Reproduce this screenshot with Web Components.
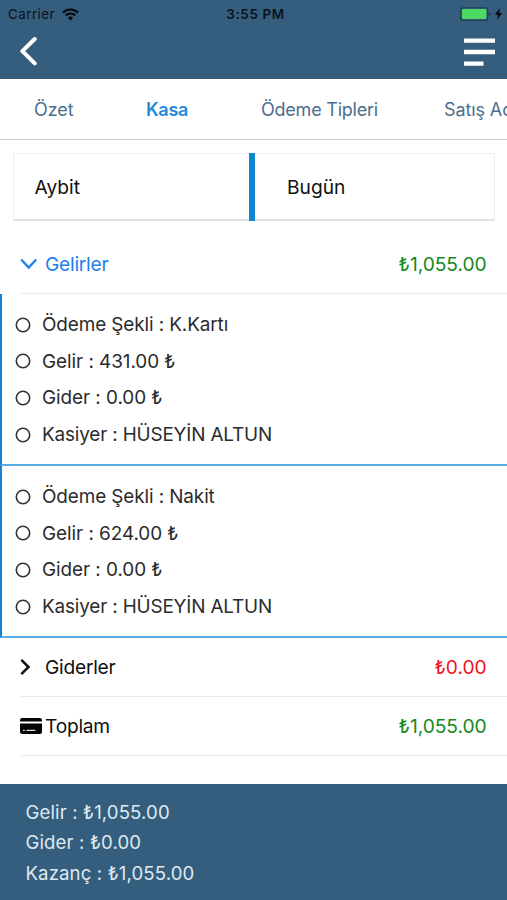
<!DOCTYPE html>
<html lang="tr">
<head>
<meta charset="utf-8">
<meta name="viewport" content="width=device-width">
<title>Kasa</title>
<style>
html,body{margin:0;height:100%;background:#fff;overflow:hidden}
</style>
</head>
<body>
<kasa-app></kasa-app>
<script>
const define = (name, html) => {
  const tpl = document.createElement('template');
  tpl.innerHTML = '<style>*{box-sizing:border-box}:host{box-sizing:border-box}</style>' + html;
  customElements.define(name, class extends HTMLElement {
    constructor() {
      super();
      this.attachShadow({mode: 'open'}).append(tpl.content.cloneNode(true));
    }
  });
};

define('status-bar', `
<style>
:host{display:grid;grid-template-columns:1fr auto 1fr;align-items:center;height:28px;padding:0 5px 0 8px;color:#0b1118;font-size:13.3px}
.l,.r{display:flex;align-items:center}
.l{gap:7px;letter-spacing:.5px}
.r{justify-content:flex-end;gap:4px}
.t{font-weight:600;font-size:13.4px;letter-spacing:.65px;padding-left:1px}
svg{display:block}
</style>
<div class="l"><span>Carrier</span>
<svg width="17" height="13" viewBox="0 0 17 13" fill="none" stroke="#05090d" stroke-width="2.2"><path d="M1 4.6a10.6 10.6 0 0 1 15 0M3.7 7.5a6.8 6.8 0 0 1 9.6 0"/><path d="M8.5 12.4 5.9 9.8a3.7 3.7 0 0 1 5.2 0z" fill="#05090d" stroke="none"/></svg></div>
<span class="t">3:55 PM</span>
<div class="r">
<svg width="31" height="14" viewBox="0 0 31 14"><rect x=".7" y=".7" width="27" height="12.6" rx="2.6" fill="none" stroke="#203c52" stroke-width="1.1"/><rect x="2" y="2" width="24.4" height="10" rx="1" fill="#4cd964"/><path d="M29 5v4q1.3-.6 1.3-2T29 5" fill="#203c52"/></svg>
<svg width="7" height="12" viewBox="0 0 7 12"><path d="M4.8 0 0 6.8h3L2 12l5-7H4.2z" fill="#05090d"/></svg></div>`);

define('nav-bar', `
<style>
:host{display:flex;justify-content:space-between;height:51px;padding:8px 12px 0 20px}
svg{display:block}
</style>
<svg width="18" height="31" viewBox="0 0 18 31" fill="none" stroke="#fff" stroke-width="4" stroke-linecap="round" stroke-linejoin="round"><path d="M14.7 3 2.4 15.2 14.7 27.4"/></svg>
<svg width="31" height="31" viewBox="0 0 31 31" fill="#fff"><path d="M0 2.4h31v4.4H0zM0 13.8h31v4.4H0zM0 25.4h19.5v4.4H0z"/></svg>`);

define('tab-strip', `
<style>
:host{display:flex;align-items:center;height:61px;border-bottom:1px solid #ccc;padding:1px 0 0 34px;overflow:hidden;white-space:nowrap;color:#4b6e8d;font-size:18px}
::slotted(*){flex:none}
</style><slot></slot>`);

define('tab-item', `
<style>
:host{display:block;width:var(--w);letter-spacing:var(--ls,-.1px)}
:host([active]){color:#1f8bdc;font-weight:600;letter-spacing:-.3px}
</style><slot></slot>`);

define('filter-card', `
<style>
:host{display:grid;grid-template-columns:235px 6px 1fr;height:68px;margin:13px 12px 0 13px;border:1px solid #eee;border-bottom:2px solid #e3e3e3;align-items:center;font-size:19.2px;color:#111}
i{background:#0e86d0;height:68px;align-self:start;margin-top:-1px}
span{letter-spacing:0}
.a,.b{padding-bottom:2px}
.a{padding-left:20.5px}.b{padding-left:32px}
</style><span class="a"><slot name="branch"></slot></span><i></i><span class="b"><slot name="date"></slot></span>`);

define('sum-row', `
<style>
:host{display:flex;align-items:center;height:59px;margin-left:20px;padding-right:20.5px;border-bottom:1px solid #ececec;font-size:19.2px;color:#111}
.i{width:25px;flex:none;display:flex}
.n{flex:1;letter-spacing:var(--ls,-.25px)}
.v{letter-spacing:-.05px;color:var(--value,#168a20)}
</style><span class="i"><slot name="icon"></slot></span><span class="n"><slot></slot></span><span class="v"><slot name="value"></slot></span>`);

define('detail-group', `
<style>
:host{display:flex;flex-direction:column;height:172px;border-left:2px solid #1682d5;border-bottom:2px solid #5badE3;padding:12.5px 0 0 13px}
</style><slot></slot>`);

define('detail-line', `
<style>
:host{display:flex;align-items:center;height:36.6px;flex:none;font-size:18.9px;color:#2b2b2b;gap:11.5px;font-feature-settings:"calt" 0}
svg{flex:none;display:block}
span{letter-spacing:var(--ls,-.05px);white-space:nowrap}
</style><svg width="15.5" height="16" viewBox="0 0 15.5 16"><circle cx="8" cy="8" r="6.7" fill="none" stroke="#333" stroke-width="1.6"/></svg><span><slot></slot></span>`);

define('totals-footer', `
<style>
:host{display:flex;flex-direction:column;height:116px;margin-top:28px;padding:13px 0 0 25.5px;background:#355e7e;color:#dfe9f1;font-size:18.6px;line-height:30.4px;font-feature-settings:"calt" 0}
</style><slot></slot>`);

define('total-line', `<style>:host{display:block;letter-spacing:.12px}</style><slot></slot>`);

define('kasa-app', `
<style>
:host{display:block;width:507px;height:900px;overflow:hidden;background:#fff;font-family:Inter,"Liberation Sans",sans-serif}
header{background:#355e7e;height:79px}
svg{display:block}
</style>
<header><status-bar></status-bar><nav-bar></nav-bar></header>
<tab-strip>
<tab-item style="--w:112px">Özet</tab-item><tab-item active style="--w:115px">Kasa</tab-item><tab-item style="--w:183px;--ls:-.22px">Ödeme Tipleri</tab-item><tab-item style="--w:160px">Satış Adetleri</tab-item>
</tab-strip>
<filter-card><span slot="branch">Aybit</span><span slot="date">Bugün</span></filter-card>
<sum-row style="margin-top:14px;color:#1d7ff0">
<svg slot="icon" width="18" height="12" viewBox="0 0 18 12" fill="none" stroke="#1d7ff0" stroke-width="2.3"><path d="m1.2 1.5 7.5 8 7.5-8"/></svg>Gelirler<span slot="value">₺1,055.00</span></sum-row>
<detail-group>
<detail-line style="--ls:-.1px">Ödeme Şekli : K.Kartı</detail-line>
<detail-line>Gelir : 431.00 ₺</detail-line>
<detail-line>Gider : 0.00 ₺</detail-line>
<detail-line style="--ls:-.16px">Kasiyer : HÜSEYİN ALTUN</detail-line>
</detail-group>
<detail-group>
<detail-line style="--ls:-.1px">Ödeme Şekli : Nakit</detail-line>
<detail-line>Gelir : 624.00 ₺</detail-line>
<detail-line>Gider : 0.00 ₺</detail-line>
<detail-line style="--ls:-.16px">Kasiyer : HÜSEYİN ALTUN</detail-line>
</detail-group>
<sum-row style="--value:#f0141e">
<svg slot="icon" width="12" height="18" viewBox="0 0 12 18" fill="none" stroke="#111" stroke-width="2.5"><path d="m1.3 1.8 7.2 7.2-7.2 7.2"/></svg>Giderler<span slot="value">₺0.00</span></sum-row>
<sum-row>
<svg slot="icon" width="22" height="16" viewBox="0 0 22 16"><path d="M2.2 0h17.6Q22 0 22 2v1.6H0V2Q0 0 2.2 0M0 5.6h22V14q0 2-2.2 2H2.2Q0 16 0 14z" fill="#050505"/><path d="M3 12.4h1.8M6.4 12.4h9" stroke="#ddd" stroke-width="1.2"/></svg>Toplam<span slot="value">₺1,055.00</span></sum-row>
<totals-footer><total-line>Gelir : ₺1,055.00</total-line><total-line>Gider : ₺0.00</total-line><total-line>Kazanç : ₺1,055.00</total-line></totals-footer>`);
</script>
</body>
</html>
